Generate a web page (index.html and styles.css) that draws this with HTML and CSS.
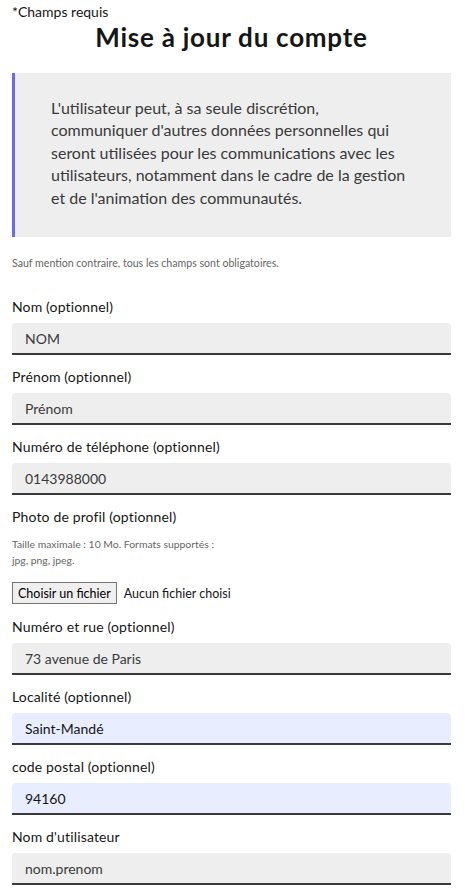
FILE: index.html
```html
<!DOCTYPE html>
<html lang="fr">
<head>
<meta charset="utf-8">
<title>Mise à jour du compte</title>
<link rel="stylesheet" href="styles.css">
</head>
<body>
<main class="page">
  <p class="required">*Champs requis</p>
  <h1 class="title">Mise à jour du compte</h1>
  <div class="callout">
    <p class="callout-text">L'utilisateur peut, à sa seule discrétion,<br>communiquer d'autres données personnelles qui<br>seront utilisées pour les communications avec les<br>utilisateurs, notamment dans le cadre de la gestion<br>et de l'animation des communautés.</p>
  </div>
  <p class="notice">Sauf mention contraire, tous les champs sont obligatoires.</p>
  <form class="form">
    <div class="field">
      <label class="label" for="nom">Nom (optionnel)</label>
      <input class="input" id="nom" type="text" value="NOM">
    </div>
    <div class="field">
      <label class="label" for="prenom">Prénom (optionnel)</label>
      <input class="input" id="prenom" type="text" value="Prénom">
    </div>
    <div class="field">
      <label class="label" for="tel">Numéro de téléphone (optionnel)</label>
      <input class="input" id="tel" type="text" value="0143988000">
    </div>
    <div class="field field-photo">
      <label class="label">Photo de profil (optionnel)</label>
      <p class="hint">Taille maximale : 10 Mo. Formats supportés :<br>jpg, png, jpeg.</p>
      <div class="file">
        <button type="button" class="file-btn">Choisir un fichier</button>
        <span class="file-name">Aucun fichier choisi</span>
      </div>
    </div>
    <div class="field">
      <label class="label" for="rue">Numéro et rue (optionnel)</label>
      <input class="input" id="rue" type="text" value="73 avenue de Paris">
    </div>
    <div class="field">
      <label class="label" for="loc">Localité (optionnel)</label>
      <input class="input input-filled" id="loc" type="text" value="Saint-Mandé">
    </div>
    <div class="field">
      <label class="label" for="cp">code postal (optionnel)</label>
      <input class="input input-filled" id="cp" type="text" value="94160">
    </div>
    <div class="field">
      <label class="label" for="user">Nom d'utilisateur</label>
      <input class="input" id="user" type="text" value="nom.prenom">
    </div>
  </form>
</main>
</body>
</html>
```

FILE: styles.css
```css
* {
  box-sizing: border-box;
}

html, body {
  margin: 0;
  padding: 0;
  background: #ffffff;
}

body {
  font-family: Lato, "Open Sans", "Liberation Sans", sans-serif;
  color: #161616;
}

.page {
  padding: 3px 14px 0 12px;
}

.required {
  margin: 0;
  font-size: 14px;
  line-height: 18px;
  color: #161616;
}

.title {
  margin: 0;
  text-align: center;
  font-size: 26px;
  line-height: 32px;
  font-weight: 700;
  letter-spacing: 0.75px;
  color: #161616;
}

.callout {
  margin-top: 20px;
  background: #eeeeee;
  border-left: 3px solid #6a6af4;
  padding: 24px 20px 28px 36px;
}

.callout-text {
  margin: 0;
  font-size: 16px;
  line-height: 22.4px;
  color: #3a3a3a;
  white-space: nowrap;
}

.notice {
  margin: 19px 0 0;
  font-size: 10.6px;
  line-height: 14px;
  color: #666666;
}

.form {
  margin-top: 27px;
}

.field {
  display: flex;
  flex-direction: column;
  margin-bottom: 12px;
}

.label {
  display: block;
  font-size: 14px;
  line-height: 20px;
  letter-spacing: 0.15px;
  color: #161616;
  margin-bottom: 6px;
}

.input {
  display: block;
  width: 100%;
  height: 32px;
  margin: 0;
  padding: 0 13px;
  border: 0;
  border-bottom: 2px solid #3a3a3a;
  border-radius: 4px 4px 0 0;
  background: #eeeeee;
  font-family: inherit;
  font-size: 14px;
  color: #3a3a3a;
  outline: none;
}

.input-filled {
  background: #e8edff;
  color: #161616;
}

.field-photo .label {
  margin-bottom: 0;
}

.hint {
  margin: 9px 0 0;
  font-size: 10.4px;
  line-height: 16px;
  color: #666666;
}

.file {
  display: flex;
  align-items: center;
  margin-top: 14px;
  margin-bottom: 1px;
}

.file-btn {
  height: 22px;
  margin: 0;
  padding: 0 5px;
  border: 1px solid #767676;
  border-radius: 0;
  background: #efefef;
  font-family: inherit;
  font-size: 12.5px;
  color: #000000;
}

.file-name {
  margin-left: 7px;
  font-size: 12.5px;
  color: #161616;
}
```
